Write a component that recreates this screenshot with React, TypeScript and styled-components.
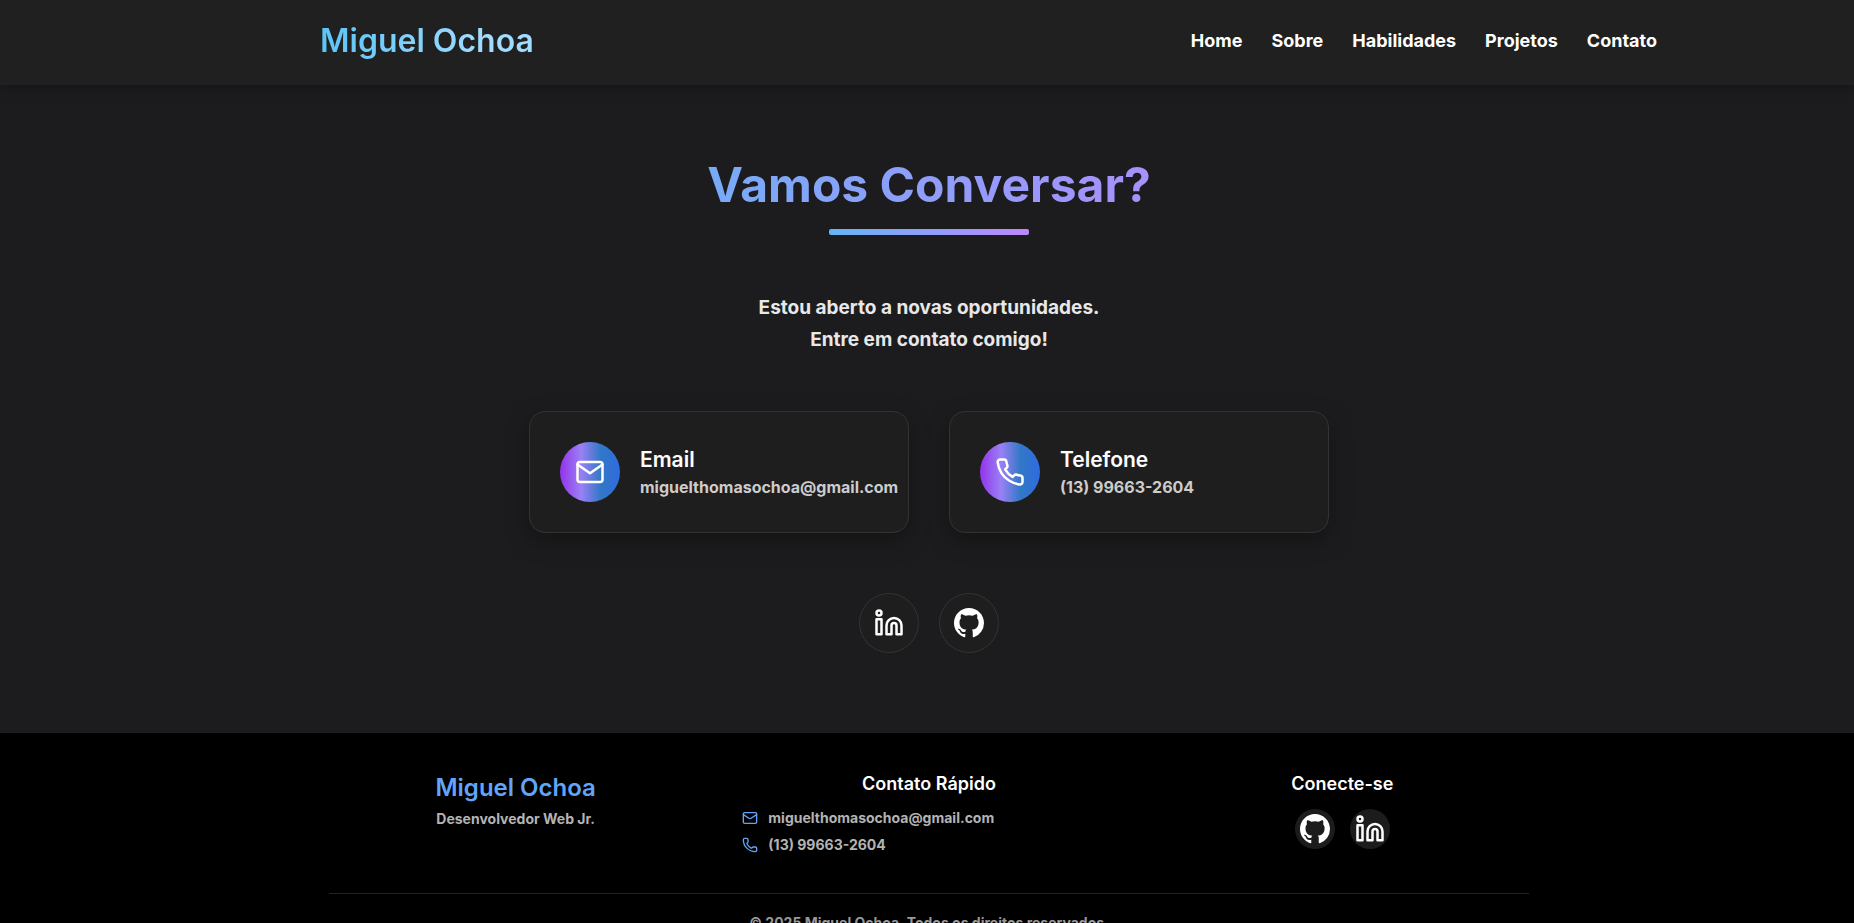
import React from "react";
import styled, { createGlobalStyle } from "styled-components";
import { FiLinkedin, FiMail, FiPhone } from "react-icons/fi";
import { LuLinkedin } from "react-icons/lu";
import { BsGithub } from "react-icons/bs";
import { Mail, Phone } from "lucide-react";

const GlobalStyle = createGlobalStyle`
  *, *::before, *::after { box-sizing: border-box; }
  body {
    margin: 0;
    background: #1c1c1e;
    color: #fff;
    font-family: Inter, "Liberation Sans", sans-serif;
    font-weight: 700;
  }
  h1, h2, h3, p, ul { margin: 0; padding: 0; }
  ul { list-style: none; }
  a { color: inherit; text-decoration: none; }
`;

const Header = styled.header`
  position: relative;
  display: flex;
  justify-content: center;
  background: #202020;
  box-shadow: 0 2px 10px rgba(0, 0, 0, 0.3);
`;

const HeaderInner = styled.div`
  display: flex;
  justify-content: space-between;
  align-items: center;
  width: 100%;
  max-width: 1460px;
  height: 85px;
  padding: 0 0 4px 123px;
`;

const Brand = styled.a`
  padding-right: 60px;
  font-size: 32px;
  line-height: 40px;
  font-weight: 600;
  background: linear-gradient(90deg, #5ac4f7, #a0dcff 60%);
  background-clip: text;
  color: transparent;
`;

const Nav = styled.nav`
  display: flex;
  gap: 29px;
  font-size: 18px;
  line-height: 24px;
`;

const Contact = styled.main`
  display: flex;
  flex-direction: column;
  align-items: center;
  padding: 64px 20px 80px 24px;
`;

const Title = styled.h1`
  width: 100%;
  max-width: 800px;
  font-size: 48px;
  line-height: 72px;
  text-align: center;
  background: linear-gradient(90deg, #64b5f6, #bb86fc);
  background-clip: text;
  color: transparent;
`;

const Underline = styled.div`
  width: 200px;
  height: 6px;
  margin-top: 8px;
  border-radius: 2px;
  background: linear-gradient(90deg, #64b5f6, #bb86fc);
`;

const Lead = styled.p`
  margin-top: 57px;
  font-size: 19px;
  line-height: 32px;
  text-align: center;
  color: #e8e8e8;
`;

const Cards = styled.div`
  display: grid;
  grid-template-columns: repeat(2, minmax(0, 1fr));
  gap: 40px;
  width: 100%;
  max-width: 800px;
  margin-top: 55px;
`;

const Card = styled.a`
  display: flex;
  align-items: center;
  gap: 20px;
  height: 122px;
  padding: 0 30px;
  border: 1px solid #333;
  border-radius: 16px;
  background: #1e1e1e;
  box-shadow: 0 8px 24px rgba(0, 0, 0, 0.3);
`;

const CardIcon = styled.span`
  display: flex;
  flex: none;
  align-items: center;
  justify-content: center;
  width: 60px;
  height: 60px;
  border-radius: 50%;
  background: linear-gradient(90deg, #9333ea, #9a80f5 35%, #3178c6 68%, #2f6be0);
`;

const CardText = styled.div`
  font-size: 16px;
  line-height: 24px;
  color: #ccc;
`;

const CardTitle = styled.h2`
  font-size: 21px;
  line-height: 30px;
  font-weight: 600;
  color: #fff;
`;

const Socials = styled.div<{ $gap: number; $top: number }>`
  display: flex;
  gap: ${(p) => p.$gap}px;
  margin-top: ${(p) => p.$top}px;
`;

const SocialLink = styled.a<{ $small?: boolean }>`
  display: flex;
  align-items: center;
  justify-content: center;
  width: ${(p) => (p.$small ? 40 : 60)}px;
  height: ${(p) => (p.$small ? 40 : 60)}px;
  border: ${(p) => (p.$small ? "none" : "1px solid #333")};
  border-radius: 50%;
  background: ${(p) => (p.$small ? "#1c1c1c" : "#1e1e1e")};
  color: #fff;
`;

const Footer = styled.footer`
  display: flex;
  flex-direction: column;
  align-items: center;
  padding: 38px 20px 24px 24px;
  background: #000;
`;

const FooterGrid = styled.div`
  display: grid;
  grid-template-columns: repeat(3, minmax(0, 1fr));
  gap: 40px;
  width: 100%;
  max-width: 1200px;
`;

const FooterColumn = styled.section`
  display: flex;
  flex-direction: column;
  align-items: center;
  font-size: 14px;
  line-height: 20px;
  color: #b3b3b3;
`;

const FooterBrand = styled.h2`
  font-size: 24px;
  line-height: 34px;
  font-weight: 600;
  color: #60a5fa;
  margin-bottom: 4px;
`;

const FooterTitle = styled.h3`
  font-size: 18px;
  line-height: 26px;
  font-weight: 600;
  color: #fff;
`;

const ContactList = styled.ul`
  align-self: stretch;
  display: grid;
  gap: 7px;
  margin-top: 11px;
`;

const ContactItem = styled.a`
  display: flex;
  align-items: center;
  gap: 10px;
  svg { color: #60a5fa; }
`;

const Copyright = styled.p`
  width: 100%;
  max-width: 1200px;
  margin-top: 38px;
  padding-top: 19px;
  border-top: 1px solid #222;
  font-size: 14px;
  line-height: 20px;
  text-align: center;
  color: #999;
`;

const links = [
  ["Home", "#home"],
  ["Sobre", "#sobre"],
  ["Habilidades", "#habilidades"],
  ["Projetos", "#projetos"],
  ["Contato", "#contato"],
];
const email = "miguelthomasochoa@gmail.com";
const phone = "(13) 99663-2604";

export default function App() {
  return (
    <>
      <GlobalStyle />
      <Header>
        <HeaderInner>
          <Brand href="#home">Miguel Ochoa</Brand>
          <Nav>
            {links.map(([label, href]) => (
              <a key={href} href={href}>{label}</a>
            ))}
          </Nav>
        </HeaderInner>
      </Header>
      <Contact id="contato">
        <Title>Vamos Conversar?</Title>
        <Underline />
        <Lead>
          Estou aberto a novas oportunidades.
          <br />
          Entre em contato comigo!
        </Lead>
        <Cards>
          <Card href={`mailto:${email}`}>
            <CardIcon><FiMail size={30} /></CardIcon>
            <CardText>
              <CardTitle>Email</CardTitle>
              {email}
            </CardText>
          </Card>
          <Card href="tel:+5513996632604">
            <CardIcon><FiPhone size={30} /></CardIcon>
            <CardText>
              <CardTitle>Telefone</CardTitle>
              {phone}
            </CardText>
          </Card>
        </Cards>
        <Socials $gap={20} $top={60}>
          <SocialLink href="#linkedin" aria-label="LinkedIn"><FiLinkedin size={30} /></SocialLink>
          <SocialLink href="#github" aria-label="GitHub"><BsGithub size={30} /></SocialLink>
        </Socials>
      </Contact>
      <Footer>
        <FooterGrid>
          <FooterColumn>
            <FooterBrand>Miguel Ochoa</FooterBrand>
            <p>Desenvolvedor Web Jr.</p>
          </FooterColumn>
          <FooterColumn>
            <FooterTitle>Contato Rápido</FooterTitle>
            <ContactList>
              <li><ContactItem href={`mailto:${email}`}><Mail size={16} />{email}</ContactItem></li>
              <li><ContactItem href="tel:+5513996632604"><Phone size={16} />{phone}</ContactItem></li>
            </ContactList>
          </FooterColumn>
          <FooterColumn>
            <FooterTitle>Conecte-se</FooterTitle>
            <Socials $gap={15} $top={12}>
              <SocialLink $small href="#github" aria-label="GitHub"><BsGithub size={30} /></SocialLink>
              <SocialLink $small href="#linkedin" aria-label="LinkedIn"><LuLinkedin size={30} /></SocialLink>
            </Socials>
          </FooterColumn>
        </FooterGrid>
        <Copyright>© 2025 Miguel Ochoa. Todos os direitos reservados.</Copyright>
      </Footer>
    </>
  );
}
